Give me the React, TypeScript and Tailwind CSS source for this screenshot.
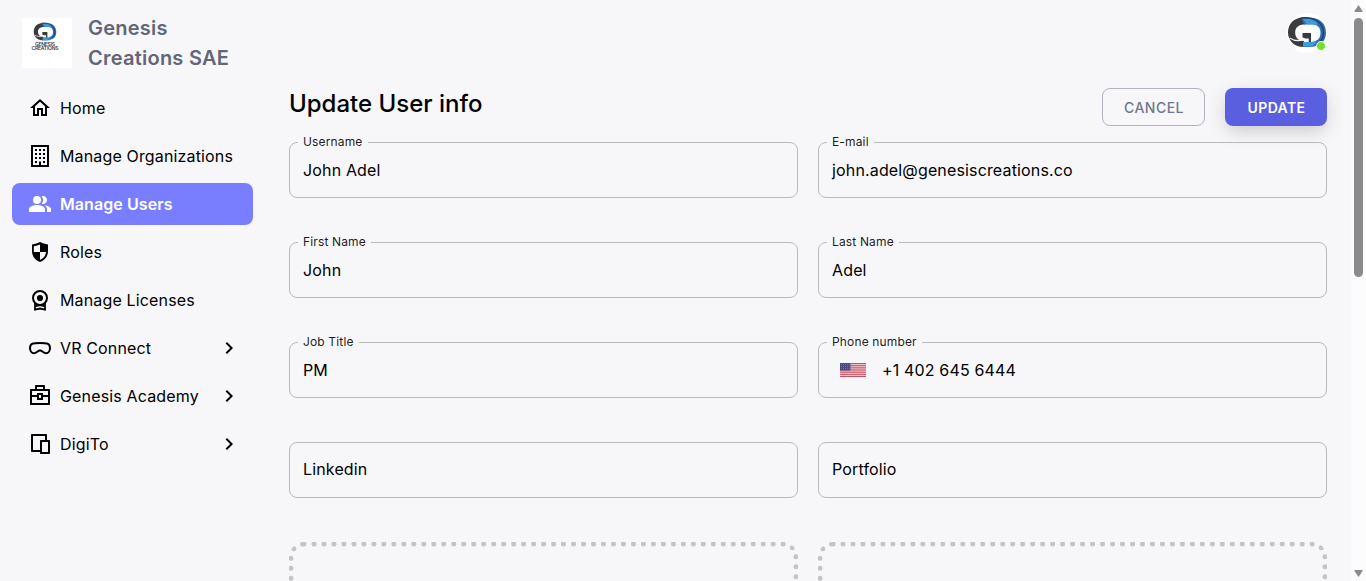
import type { ReactNode } from 'react';
import { MdOutlineHome, MdPeopleAlt, MdOutlineChevronRight } from 'react-icons/md';
import { RiBriefcase4Line, RiDeviceLine } from 'react-icons/ri';

function BuildingIcon() {
  return (
    <svg viewBox="0 0 24 24" className="size-6" fill="currentColor">
      <path d="M19 3v18h-6v-3.5h-2V21H5V3h14m-4 4h2V5h-2v2m-4 0h2V5h-2v2M7 7h2V5H7v2m8 4h2V9h-2v2m-4 0h2V9h-2v2m-4 0h2V9H7v2m8 4h2v-2h-2v2m-4 0h2v-2h-2v2m-4 0h2v-2H7v2m8 4h2v-2h-2v2m-8 0h2v-2H7v2M21 1H3v22h18V1z" />
    </svg>
  );
}

function LicenseIcon() {
  return (
    <svg viewBox="0 0 24 24" className="size-6" fill="none" stroke="currentColor" strokeWidth="2">
      <circle cx="12" cy="10" r="7" />
      <circle cx="12" cy="10" r="3.1" fill="currentColor" stroke="none" />
      <path d="M7 15v6.600l5-1.100 5 1.100V15M7 18.300l5-1.100 5 1.100" strokeWidth="1.800" />
    </svg>
  );
}

function ShieldIcon() {
  return (
    <svg viewBox="0 0 24 24" className="size-6" fill="currentColor">
      <path fillRule="evenodd" d="M12 2c2.300 1.300 4.900 2 8 2.500V11c0 5.500-3.300 9.500-8 11-4.700-1.500-8-5.500-8-11V4.500C7.100 4 9.700 3.300 12 2zM12 4.500C10.200 5.400 8.200 5.900 5.800 6.200V12H12zM12 12v7.900c3.500-1.400 5.700-4.300 6.100-7.900z" />
    </svg>
  );
}

function HeadsetIcon() {
  return (
    <svg viewBox="0 0 24 24" className="size-6" fill="none" stroke="currentColor" strokeWidth="2">
      <path d="M12 6.900c3.600 0 6 .1 7.500.8C21.200 8.500 22 10 22 12c0 3-1.600 5.200-4 5.200-2.700 0-3.700-2.700-6-2.700s-3.300 2.700-6 2.700c-2.400 0-4-2.200-4-5.200 0-2 .8-3.500 2.500-4.300C6 7 8.400 6.900 12 6.900z" />
    </svg>
  );
}

type Nav = { label: string; icon: ReactNode; active?: boolean; more?: boolean };
const nav: Nav[] = [
  { label: 'Home', icon: <MdOutlineHome size={24} /> },
  { label: 'Manage Organizations', icon: <BuildingIcon /> },
  { label: 'Manage Users', icon: <MdPeopleAlt size={24} />, active: true },
  { label: 'Roles', icon: <ShieldIcon /> },
  { label: 'Manage Licenses', icon: <LicenseIcon /> },
  { label: 'VR Connect', icon: <HeadsetIcon />, more: true },
  { label: 'Genesis Academy', icon: <RiBriefcase4Line size={24} />, more: true },
  { label: 'DigiTo', icon: <RiDeviceLine size={24} />, more: true },
];

function Emblem({ className }: { className: string }) {
  return (
    <svg viewBox="0 0 40 32" className={className} fill="none">
      <path d="M16 1.500C7 1.500 1 8 1 16.500S7.500 31 17 31v-6c-5.500 0-8.800-3-8.800-8.500S12 8.500 18 8.500l-2-7z" fill="#3a3b3f" />
      <path d="M14 1.500h7c11.500 0 18 5.500 18 15S33 31 22 31h-5v-5h7c6 0 9.500-3.200 9.500-9.200S30 8.500 24 8.500h-7z" fill="#2c6cb8" />
      <path d="M16 3h10c2.500 1.300 4 3.200 5 6.300-2.200-.8-4-1-7-1h-4z" fill="#3b9ddb" />
      <path d="M16 26h8c2.500 0 4-.5 6-2-1 3.500-3 5.500-6 6.500h-8z" fill="#3b9ddb" />
      <path d="M14 2c12-1.500 22 4 22.500 14 .1 5-1.500 8-4.500 11" stroke="#26406d" strokeWidth="1.600" />
      <path d="M2.500 22c4 2.600 9 3 13 2.200" stroke="#f7f7f9" strokeWidth="1.300" />
      <path d="M16 25.500V24c0-2.500-3-3-4.500-3V17H24v9h-3.500" fill="none" />
      <path d="M15.500 17H24v9h-2.200v-3.500h-3.300c-1 0-1.500-1-3-1z" fill="#3a3b3f" />
    </svg>
  );
}

function Field({ label, value, children }: { label: string; value?: string; children?: ReactNode }) {
  return (
    <fieldset className="h-[64px] min-w-0 rounded-lg border border-[#b9babd] px-[5px]">
      <legend className="ml-[3px] h-4 px-[5px] text-xs leading-4 tracking-[0.15px] text-black/90">{label}</legend>
      <div className="flex h-10 items-center px-2 text-base tracking-[0.15px]">{children ?? value}</div>
    </fieldset>
  );
}

function Flag() {
  return (
    <svg viewBox="0 0 26 14" className="mr-4 ml-2 h-[14px] w-[26px]">
      <rect width="26" height="14" fill="#efd3d8" />
      {[0, 1, 2, 3, 4, 5, 6].map((i) => (
        <rect key={i} y={i * 2.15} width="26" height="1.1" fill="#c9505f" />
      ))}
      <rect width="10.500" height="7.500" fill="#4b4b80" />
      {[1, 3, 5].map((y) => (
        <path key={y} d={`M1 ${y + 0.5}h9`} stroke="#8787a8" strokeWidth=".6" strokeDasharray="1 1" />
      ))}
    </svg>
  );
}

export default function App() {
  return (
    <div className="flex h-[581px] w-full overflow-hidden bg-[#f7f7f9] font-['Inter',sans-serif] text-black">
      <aside className="w-[253px] shrink-0 pl-3">
        <div className="flex h-[84px] gap-4 pt-[13px] pl-[10px]">
          <div className="mt-[5px] flex size-[50px] shrink-0 flex-col items-center bg-white pt-1 pr-[5px]">
            <Emblem className="h-[19px] w-[26px]" />
            <svg viewBox="0 0 30 11" className="h-[11px] w-[30px]">
              <text x="15" y="4.600" textAnchor="middle" fontSize="5" fontWeight="600" textLength="20" fill="#3a3b3f">GENESIS</text>
              <text x="15" y="9.300" textAnchor="middle" fontSize="5" fontWeight="600" textLength="27" fill="#3a3b3f">CREATIONS</text>
            </svg>
          </div>
          <div className="w-[150px] text-xl leading-[30px] font-semibold tracking-[0.24px] text-[#636578]">Genesis Creations SAE</div>
        </div>
        <nav className="mt-[3px] flex flex-col gap-1.5">
          {nav.map((n) => (
            <div
              key={n.label}
              className={`flex h-[42px] items-center rounded-lg pr-3 pl-4 text-base ${n.active ? 'bg-[#787eff] font-semibold tracking-[0.08px] text-white' : 'tracking-[0.15px]'}`}
            >
              {n.icon}
              <span className="ml-2 flex-1 whitespace-nowrap">{n.label}</span>
              {n.more && <MdOutlineChevronRight size={24} />}
            </div>
          ))}
        </nav>
      </aside>

      <main className="ml-9 w-[1038px] shrink-0">
        <header className="flex h-[88px] justify-end pt-[13px]">
          <div className="relative size-10 rounded-full bg-white">
            <Emblem className="mt-[3px] h-8 w-10" />
            <span className="absolute right-[1px] bottom-[2px] size-[10px] rounded-full border border-white bg-[#72e128]" />
          </div>
        </header>
        <div className="flex h-[46px] justify-between">
          <h1 className="text-2xl leading-8 font-medium">Update User info</h1>
          <div className="flex h-[38px] gap-5">
            <button className="w-[103px] rounded-lg border border-[#b0b3c0] pt-px pl-px text-sm font-medium tracking-[0.46px] text-[#6d788d]">CANCEL</button>
            <button className="w-[102px] rounded-lg bg-[#5a5fe0] pt-px pl-px text-sm font-semibold tracking-[0.4px] text-white shadow-[0_6px_18px_-2px_rgba(58,53,65,0.25)]">UPDATE</button>
          </div>
        </div>
        <div className="grid grid-cols-2 gap-x-5 gap-y-9">
          <Field label="Username" value="John Adel" />
          <Field label="E-mail" value="john.adel@genesiscreations.co" />
          <Field label="First Name" value="John" />
          <Field label="Last Name" value="Adel" />
          <Field label="Job Title" value="PM" />
          <Field label="Phone number">
            <Flag />
            <span>+1 402 645 6444</span>
          </Field>
          <div className="mt-2 flex h-14 items-center rounded-lg border border-[#b9babd] px-[13px] pb-0.5 tracking-[0.15px]">Linkedin</div>
          <div className="mt-2 flex h-14 items-center rounded-lg border border-[#b9babd] px-[13px] pb-0.5 tracking-[0.15px]">Portfolio</div>
          <div className="mt-2 h-[200px] rounded-[15px] border-5 border-dotted border-[#c4c4c4]" />
          <div className="mt-2 h-[200px] rounded-[15px] border-5 border-dotted border-[#c4c4c4]" />
        </div>
      </main>

      <div className="ml-auto flex w-[15px] shrink-0 flex-col items-center bg-[#fcfcfc]">
        <svg viewBox="0 0 15 18" className="h-[18px] w-[15px]"><path d="M7.500 5l4 6v1h-8v-1z" fill="#8b8b8b" /></svg>
        <div className="h-[259px] w-[9px] rounded-full bg-[#8b8b8b]" />
        <svg viewBox="0 0 15 15" className="mt-auto h-[15px] w-[15px]"><path d="M3.500 4h8v1l-4 6-4-6z" fill="#8b8b8b" /></svg>
      </div>
    </div>
  );
}
